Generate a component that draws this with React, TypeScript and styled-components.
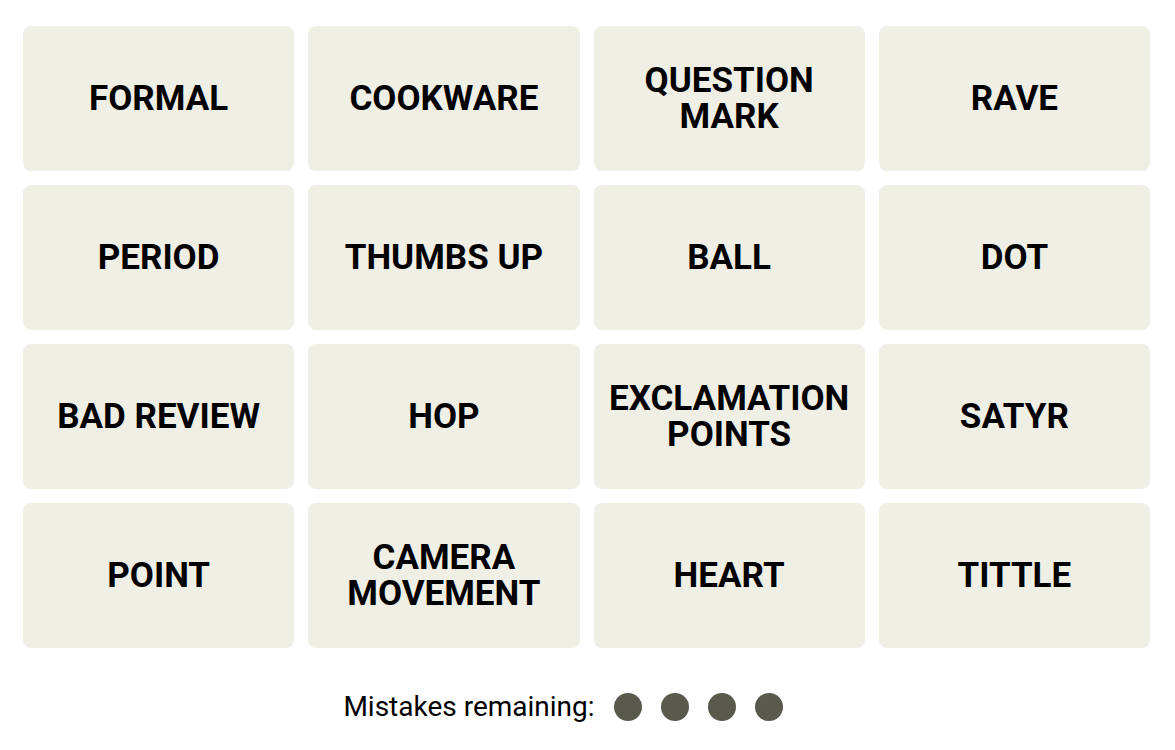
import React from "react";
import styled, { createGlobalStyle } from "styled-components";

const Global = createGlobalStyle`
  html, body { margin: 0; padding: 0; background: #ffffff; }
  body { font-family: Roboto, "Liberation Sans", sans-serif; color: #000; }
`;

const Page = styled.main`
  width: 1175px;
  padding: 26px 25px 0 23px;
  box-sizing: border-box;
  display: flex;
  flex-direction: column;
  align-items: stretch;
`;

const Board = styled.div`
  display: grid;
  grid-template-columns: repeat(4, 1fr);
  grid-auto-rows: 145px;
  column-gap: 14px;
  row-gap: 14px;
`;

const Tile = styled.button`
  border: none;
  border-radius: 8px;
  background: #efefe6;
  display: flex;
  align-items: center;
  justify-content: center;
  padding: 0 8px;
  font-family: Roboto, "Liberation Sans", sans-serif;
  font-weight: 700;
  font-size: 35px;
  line-height: 36px;
  text-transform: uppercase;
  text-align: center;
  color: #000;
  cursor: pointer;
`;

const Label = styled.span`
  display: flex;
  flex-direction: column;
  align-items: center;
`;

const Line = styled.span`
  display: block;
  white-space: nowrap;
`;

const Mistakes = styled.div`
  display: flex;
  align-items: center;
  justify-content: center;
  gap: 19px;
  margin-top: 42px;
  margin-right: 47px;
  font-size: 28px;
  font-weight: 400;
  color: #000;
`;

const Dots = styled.div`
  display: flex;
  gap: 19px;
`;

const Dot = styled.span`
  width: 28px;
  height: 28px;
  border-radius: 50%;
  background: #5a594e;
`;

const words = [
  ["FORMAL"], ["COOKWARE"], ["QUESTION", "MARK"], ["RAVE"],
  ["PERIOD"], ["THUMBS UP"], ["BALL"], ["DOT"],
  ["BAD REVIEW"], ["HOP"], ["EXCLAMATION", "POINTS"], ["SATYR"],
  ["POINT"], ["CAMERA", "MOVEMENT"], ["HEART"], ["TITTLE"],
];

export default function App() {
  return (
    <>
      <Global />
      <Page>
        <Board>
          {words.map((lines, i) => (
            <Tile key={i}>
              <Label>
                {lines.map((l, j) => (
                  <Line key={j}>{l}</Line>
                ))}
              </Label>
            </Tile>
          ))}
        </Board>
        <Mistakes>
          <span>Mistakes remaining:</span>
          <Dots>
            <Dot />
            <Dot />
            <Dot />
            <Dot />
          </Dots>
        </Mistakes>
      </Page>
    </>
  );
}
